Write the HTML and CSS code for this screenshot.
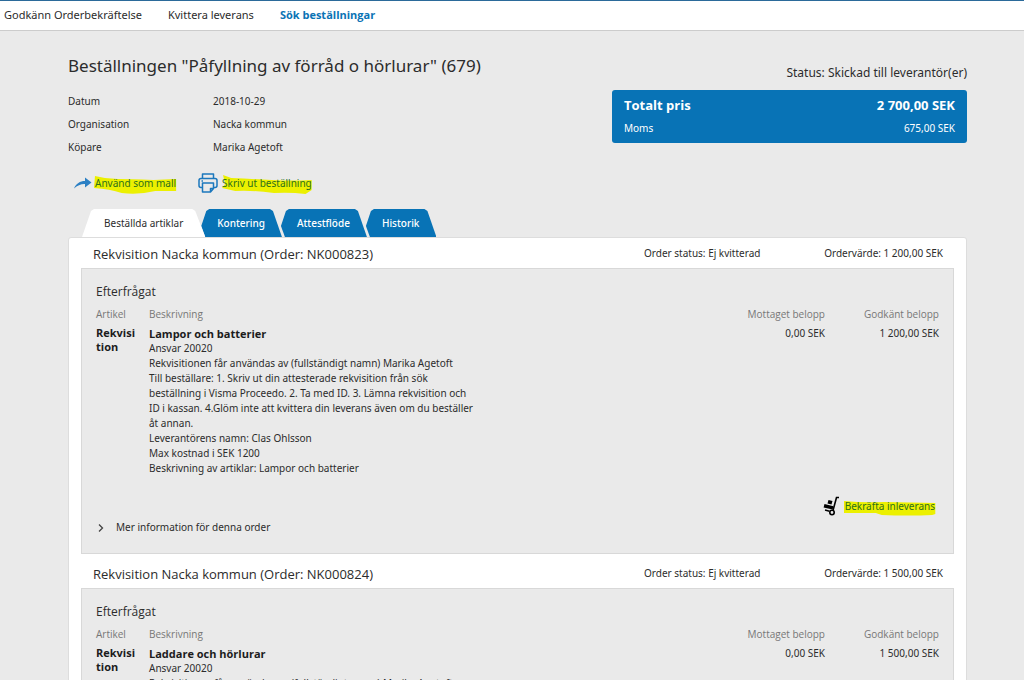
FILE: index.html
```html
<!DOCTYPE html>
<html lang="sv">
<head>
<meta charset="utf-8">
<meta name="viewport" content="width=device-width, initial-scale=1">
<title>Beställningen "Påfyllning av förråd o hörlurar" (679)</title>
<link rel="stylesheet" href="styles.css">
</head>
<body>
<nav class="topnav">
  <a href="#">Godkänn Orderbekräftelse</a>
  <a href="#">Kvittera leverans</a>
  <a href="#" class="current">Sök beställningar</a>
</nav>
<main class="page">
  <header class="summary">
    <div class="summary-info">
      <h1>Beställningen "Påfyllning av förråd o hörlurar" (679)</h1>
      <dl class="facts">
        <dt>Datum</dt><dd>2018-10-29</dd>
        <dt>Organisation</dt><dd>Nacka kommun</dd>
        <dt>Köpare</dt><dd>Marika Agetoft</dd>
      </dl>
    </div>
    <div class="summary-price">
      <p class="status">Status: Skickad till leverantör(er)</p>
      <div class="price-box">
        <div class="price-total"><span>Totalt pris</span><span>2 700,00 SEK</span></div>
        <div class="price-vat"><span>Moms</span><span>675,00 SEK</span></div>
      </div>
    </div>
  </header>

  <div class="actions">
    <a href="#" class="action">
      <svg class="icon-share" width="20" height="14" viewBox="0 0 20 14"><path d="M1 12.500C3 7.500 7 5 12 5V1.500L18.500 6.500 12 11.500V8C8 7.800 4.500 9.500 1 12.500Z" fill="#2c80c4"/></svg>
      <span class="marked">
        <svg class="marker" viewBox="0 0 84 20" preserveAspectRatio="none"><path d="M1 1Q12 4 24 4T60 5L83 4V16L62 16Q45 20 28 18Q16 14 0 13Z"/></svg>
        <span class="marked-text">Använd som mall</span>
      </span>
    </a>
    <a href="#" class="action">
      <svg class="icon-print" width="20" height="20" viewBox="0 0 20 20" fill="none" stroke="#1c78bd" stroke-width="1.500" stroke-linejoin="round"><path d="M4.500 5.500V1h11v4.500M4.500 14.500H3Q1 14.500 1 12.500V7.500Q1 5.500 3 5.500H17Q19 5.500 19 7.500V12.500Q19 14.500 17 14.500H15.500M4.500 10H15.500V15.500L12.500 19H4.500ZM12.500 19V15.500H15.500M3.500 8H5"/></svg>
      <span class="marked">
        <svg class="marker" viewBox="0 0 90 20" preserveAspectRatio="none"><path d="M2 0L10 3Q30 4 50 5T89 5V15L83 19Q68 17 52 18Q30 15 14 16L1 13L4 9Z"/></svg>
        <span class="marked-text">Skriv ut beställning</span>
      </span>
    </a>
  </div>

  <nav class="tabs">
    <a href="#" class="tab tab-active">Beställda artiklar</a>
    <a href="#" class="tab">Kontering</a>
    <a href="#" class="tab">Attestflöde</a>
    <a href="#" class="tab">Historik</a>
  </nav>

  <section class="panel">
    <article class="order">
      <header class="order-head">
        <h2>Rekvisition Nacka kommun (Order: NK000823)</h2>
        <span class="order-status">Order status: Ej kvitterad</span>
        <span class="order-value">Ordervärde: 1 200,00 SEK</span>
      </header>
      <div class="order-body">
        <h3>Efterfrågat</h3>
        <table class="items">
          <thead><tr><th class="col-item">Artikel</th><th>Beskrivning</th><th class="col-received">Mottaget belopp</th><th class="col-approved">Godkänt belopp</th></tr></thead>
          <tbody><tr>
            <td class="item-name">Rekvisition</td>
            <td>
              <div class="description">
                <strong>Lampor och batterier</strong>
                <p>Ansvar 20020</p>
                <p>Rekvisitionen får användas av (fullständigt namn) Marika Agetoft</p>
                <p>Till beställare: 1. Skriv ut din attesterade rekvisition från sök beställning i Visma Proceedo. 2. Ta med ID. 3. Lämna rekvisition och ID i kassan. 4.Glöm inte att kvittera din leverans även om du beställer åt annan.</p>
                <p>Leverantörens namn: Clas Ohlsson</p>
                <p>Max kostnad i SEK 1200</p>
                <p>Beskrivning av artiklar: Lampor och batterier</p>
              </div>
            </td>
            <td class="amount">0,00 SEK</td>
            <td class="amount">1 200,00 SEK</td>
          </tr></tbody>
        </table>
        <div class="order-action">
          <a href="#" class="action">
            <svg class="icon-cart" width="17" height="20" viewBox="0 0 17 20"><path d="M16 1.500H13.500L10 14.500" fill="none" stroke="#000" stroke-width="1.600"/><path d="M5.500 4L9.500 5L8.500 8.500L4.500 7.500ZM1.500 8L10.500 10.200L9.600 13.600L0.600 11.600Z"/><circle cx="9" cy="16.500" r="2.200" fill="#eaeaea" stroke="#000" stroke-width="1.600"/><path d="M2 14L6.500 15.200" stroke="#000" stroke-width="1.500"/></svg>
            <span class="marked">
              <svg class="marker" viewBox="0 0 93 20" preserveAspectRatio="none"><path d="M0 3Q20 5 40 4L92 5V16L89 17Q65 18 38 17L32 15L0 15Z"/></svg>
              <span class="marked-text">Bekräfta inleverans</span>
            </span>
          </a>
        </div>
        <button type="button" class="more"><svg width="6" height="8" viewBox="0 0 6 8" fill="none" stroke="#444" stroke-width="1.300"><path d="M1 0.500L4.500 4L1 7.500"/></svg>Mer information för denna order</button>
      </div>
    </article>

    <article class="order">
      <header class="order-head">
        <h2>Rekvisition Nacka kommun (Order: NK000824)</h2>
        <span class="order-status">Order status: Ej kvitterad</span>
        <span class="order-value">Ordervärde: 1 500,00 SEK</span>
      </header>
      <div class="order-body">
        <h3>Efterfrågat</h3>
        <table class="items">
          <thead><tr><th class="col-item">Artikel</th><th>Beskrivning</th><th class="col-received">Mottaget belopp</th><th class="col-approved">Godkänt belopp</th></tr></thead>
          <tbody><tr>
            <td class="item-name">Rekvisition</td>
            <td>
              <div class="description">
                <strong>Laddare och hörlurar</strong>
                <p>Ansvar 20020</p>
                <p>Rekvisitionen får användas av (fullständigt namn) Marika Agetoft</p>
              </div>
            </td>
            <td class="amount">0,00 SEK</td>
            <td class="amount">1 500,00 SEK</td>
          </tr></tbody>
        </table>
      </div>
    </article>
  </section>
</main>
</body>
</html>
```
FILE: styles.css
```css
* { box-sizing: border-box; }
body {
  margin: 0;
  background: #eaeaea;
  color: #2c2c2c;
  font-family: "Noto Sans", "Open Sans", sans-serif;
  font-size: 10px;
  line-height: 15px;
}
h1, h2, h3, p, dl, dd { margin: 0; font-weight: 400; }
a { color: inherit; text-decoration: none; }

.topnav {
  display: flex;
  gap: 26px;
  height: 31px;
  padding: 5px 4px 0;
  border-top: 1px solid #2b6a9a;
  border-bottom: 1px solid #ccc;
  background: #fff;
  font-size: 11px;
  line-height: 18px;
}
.topnav .current { color: #0a73b5; font-family: "Open Sans", sans-serif; font-weight: 700; }

.page { padding: 23px 57px 0 68px; }

.summary { display: flex; justify-content: space-between; }
h1 { font-size: 17px; line-height: 23px; }
.facts {
  display: grid;
  grid-template-columns: 145px auto;
  grid-auto-rows: 23px;
  margin-top: 13px;
  line-height: 23px;
}
.summary-price { width: 355px; padding-top: 9px; }
.status { font-size: 12px; line-height: 20px; text-align: right; }
.price-box {
  margin-top: 7px;
  padding: 5px 12px 3px;
  border-radius: 3px;
  background: #0873b6;
  color: #fff;
}
.price-box div { display: flex; justify-content: space-between; }
.price-total { font-family: "Open Sans", sans-serif; font-size: 13px; font-weight: 700; line-height: 21px; }
.price-vat { line-height: 24px; }

.actions { display: flex; gap: 22px; margin: 14px 0 0 5px; }
.action { display: flex; align-items: center; gap: 2px; height: 20px; }
.marked { position: relative; display: block; color: #2d6f1c; }
.marker {
  position: absolute;
  inset: -1px -1px -3px -1px;
  width: calc(100% + 2px);
  height: 20px;
  fill: #ecf000;
}
.marked-text { position: relative; }
.icon-print { margin-right: 2px; }

.tabs { display: flex; margin: 16px 0 0 14px; }
.tab {
  height: 28px;
  margin-right: -1px;
  padding: 0 17px 0 16px;
  background: #0873b6;
  color: #fff;
  line-height: 28px;
  font-weight: 500;
  clip-path: polygon(0 17px, 5px 2px, 8px 0, calc(100% - 12px) 0, calc(100% - 9px) 2px, 100% 100%, 4px 100%);
}
.tab-active {
  z-index: 1;
  margin-right: -4px;
  padding: 0 22px;
  background: #fff;
  color: #2c2c2c;
  font-weight: 400;
  clip-path: polygon(0 100%, 9px 2px, 12px 0, calc(100% - 13px) 0, calc(100% - 10px) 2px, 100% 100%);
}

.panel {
  padding: 0 12px 12px;
  border: 1px solid #ddd;
  border-radius: 3px;
  background: #fff;
}
.order-head { display: flex; align-items: center; height: 30px; padding: 2px 11px 0 12px; }
.order + .order .order-head { height: 34px; padding-top: 6px; }
.order-head h2 { flex: 1; font-family: "Open Sans", sans-serif; font-size: 13px; line-height: 20px; }
.order-status, .order-value { padding-bottom: 2px; }
.order-status { width: 177px; }
.order-value { width: 122px; text-align: right; white-space: nowrap; }
.order-body { padding: 14px 14px 18px; border: 1px solid #d8d8d8; background: #eaeaea; }
h3 { font-family: "Open Sans", sans-serif; font-size: 12px; line-height: 18px; }

.items { width: 100%; margin-top: 4px; border-collapse: collapse; table-layout: fixed; }
.items th { padding: 0; color: #777; font-family: "Open Sans", sans-serif; font-weight: 400; line-height: 18px; text-align: left; }
.items td { padding: 3px 0 0; vertical-align: top; }
.items .col-item { width: 53px; }
.items .col-received { width: 100px; text-align: right; }
.items .col-approved { width: 114px; text-align: right; }
.items .item-name { padding-right: 12px; line-height: 14px; overflow-wrap: anywhere; }
.items .item-name, .description strong { color: #1c1c1c; font-family: "Open Sans", sans-serif; font-size: 11px; font-weight: 700; }
.items .amount { text-align: right; }
.description { max-width: 328px; }
.description strong { display: block; }

.order-action { display: flex; justify-content: flex-end; margin-top: 20px; padding-right: 4px; }
.icon-cart { margin-right: 3px; }
.more {
  display: flex;
  align-items: center;
  gap: 12px;
  margin-top: 4px;
  padding: 0 2px;
  border: 0;
  background: none;
  color: inherit;
  font: inherit;
}
```
